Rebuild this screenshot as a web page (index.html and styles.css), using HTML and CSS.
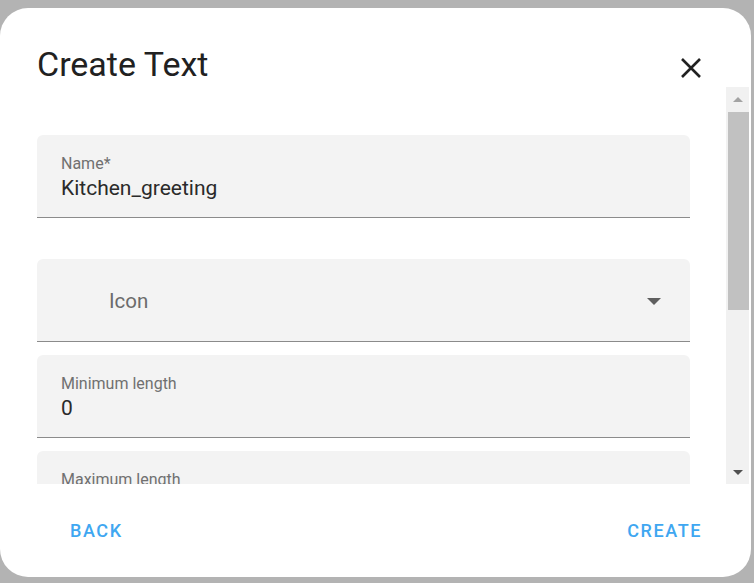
FILE: index.html
```html
<!DOCTYPE html>
<html>
<head>
<meta charset="utf-8">
<link rel="stylesheet" href="styles.css">
</head>
<body>
<div class="page">
  <div class="dialog">
    <div class="header">
      <h2 class="title">Create Text</h2>
      <svg class="close" width="20" height="20" viewBox="0 0 20 20"><path d="M1 1 L19 19 M19 1 L1 19" stroke="#212121" stroke-width="2.6" stroke-linecap="butt"/></svg>
    </div>
    <div class="body">
      <div class="scroll">
        <div class="field name-field">
          <div class="label">Name*</div>
          <div class="value">Kitchen_greeting</div>
        </div>
        <div class="field select-field">
          <div class="placeholder">Icon</div>
          <span class="arrow"></span>
        </div>
        <div class="field">
          <div class="label">Minimum length</div>
          <div class="value">0</div>
        </div>
        <div class="field">
          <div class="label">Maximum length</div>
          <div class="value">255</div>
        </div>
      </div>
      <div class="scrollbar">
        <div class="sb-btn"><span class="tri-up"></span></div>
        <div class="sb-thumb"></div>
        <div class="sb-track"></div>
        <div class="sb-btn"><span class="tri-down"></span></div>
      </div>
    </div>
    <div class="footer">
      <button class="btn">BACK</button>
      <button class="btn">CREATE</button>
    </div>
  </div>
</div>
</body>
</html>
```
FILE: styles.css
```css
* { box-sizing: border-box; }
html, body { margin: 0; padding: 0; }
body {
  width: 754px;
  height: 583px;
  overflow: hidden;
  background: #b3b3b3;
  font-family: Roboto, "Liberation Sans", sans-serif;
}
.page { padding-top: 8px; }
.dialog {
  width: 751px;
  height: 569px;
  background: #fff;
  border-radius: 28px;
  display: flex;
  flex-direction: column;
  overflow: hidden;
}
.header {
  height: 79px;
  display: flex;
  justify-content: space-between;
  align-items: flex-start;
  padding-left: 37px;
  padding-right: 50px;
  flex: none;
}
.title {
  margin: 36px 0 0 0;
  font-size: 34px;
  line-height: 40px;
  font-weight: 400;
  color: #212121;
}
.close { margin-top: 50px; }
.body {
  height: 397px;
  display: flex;
  flex: none;
}
.scroll {
  flex: 1;
  overflow: hidden;
  padding: 48px 36px 0 37px;
}
.field {
  height: 83px;
  background: #f3f3f3;
  border-radius: 6px 6px 0 0;
  border-bottom: 1px solid #8b8b8b;
  padding: 19.5px 24px 0 24px;
  margin-bottom: 13px;
}
.name-field { margin-bottom: 41px; }
.label {
  font-size: 16px;
  line-height: 18px;
  color: #707070;
}
.value {
  margin-top: 3.5px;
  font-size: 21px;
  line-height: 24px;
  color: #2a2a2a;
}
.select-field {
  display: flex;
  align-items: center;
  justify-content: space-between;
  padding: 0 29px 0 72px;
}
.placeholder {
  font-size: 20.5px;
  line-height: 24px;
  color: #6b6b6b;
  margin-top: 1px;
}
.arrow {
  width: 0;
  height: 0;
  border-left: 7.5px solid transparent;
  border-right: 7.5px solid transparent;
  border-top: 7px solid #5f5f5f;
  margin-top: 2px;
}
.scrollbar {
  width: 23px;
  margin-right: 2px;
  background: #f1f1f1;
  display: flex;
  flex-direction: column;
  flex: none;
}
.sb-btn {
  height: 24px;
  display: flex;
  align-items: center;
  justify-content: center;
}
.sb-thumb {
  height: 198px;
  margin: 1px 0 0 2px;
  background: #c1c1c1;
}
.sb-track { flex: 1; }
.tri-up {
  width: 0; height: 0;
  border-left: 5px solid transparent;
  border-right: 5px solid transparent;
  border-bottom: 5px solid #a3a3a3;
}
.tri-down {
  width: 0; height: 0;
  border-left: 5px solid transparent;
  border-right: 5px solid transparent;
  border-top: 5px solid #505050;
}
.footer {
  flex: 1;
  display: flex;
  justify-content: space-between;
  align-items: center;
  padding: 0 49px 0 70px;
}
.btn {
  background: none;
  border: none;
  padding: 0;
  font-family: Roboto, "Liberation Sans", sans-serif;
  font-size: 18px;
  font-weight: 500;
  letter-spacing: 1.6px;
  color: #3fa7f1;
  line-height: 24px;
}
```
